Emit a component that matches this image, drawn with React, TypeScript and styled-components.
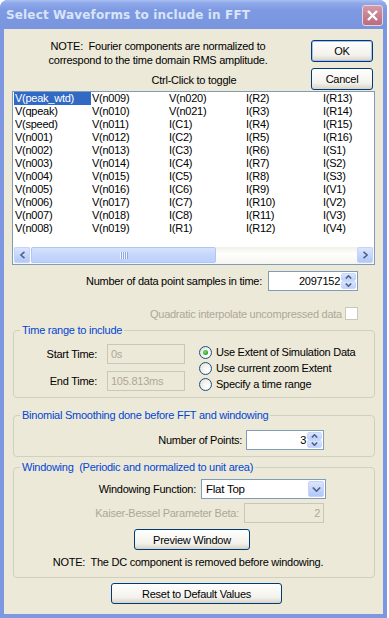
import React from 'react';
import styled, { createGlobalStyle } from 'styled-components';

const pad = (n: number) => String(n).padStart(3, '0');
const range = (a: number, b: number) => Array.from({ length: b - a + 1 }, (_, i) => a + i);

const COLUMNS: string[][] = [
  ['V(peak_wtd)', 'V(qpeak)', 'V(speed)', ...range(1, 8).map(n => `V(n${pad(n)})`)],
  range(9, 19).map(n => `V(n${pad(n)})`),
  ['V(n020)', 'V(n021)', ...range(1, 8).map(n => `I(C${n})`), 'I(R1)'],
  range(2, 12).map(n => `I(R${n})`),
  ['I(R13)', 'I(R14)', 'I(R15)', 'I(R16)', 'I(S1)', 'I(S2)', 'I(S3)', 'I(V1)', 'I(V2)', 'I(V3)', 'I(V4)'],
];

const RADIOS = ['Use Extent of Simulation Data', 'Use current zoom Extent', 'Specify a time range'];

const Chevron = ({ dir, w = 7, h = 4 }: { dir: 'up' | 'down' | 'left' | 'right'; w?: number; h?: number }) => {
  const paths = {
    up: `M0.8 ${h - 0.5} L${w / 2} 0.8 L${w - 0.8} ${h - 0.5}`,
    down: `M0.8 0.5 L${w / 2} ${h - 0.8} L${w - 0.8} 0.5`,
    left: `M${w - 0.5} 0.8 L0.8 ${h / 2} L${w - 0.5} ${h - 0.8}`,
    right: `M0.5 0.8 L${w - 0.8} ${h / 2} L0.5 ${h - 0.8}`,
  };
  return (
    <svg width={w} height={h} viewBox={`0 0 ${w} ${h}`}>
      <path d={paths[dir]} fill="none" stroke="#4d6185" strokeWidth="1.6" />
    </svg>
  );
};

const Spin = ({ value, width }: { value: string; width: number }) => (
  <SpinBox style={{ width }}>
    <SpinValue>{value}</SpinValue>
    <SpinButtons>
      <SpinHalf>
        <Chevron dir="up" />
      </SpinHalf>
      <SpinHalf>
        <Chevron dir="down" />
      </SpinHalf>
    </SpinButtons>
  </SpinBox>
);

const App = () => {
  return (
    <>
      <GlobalStyle />
      <Window>
        <TitleBar>
          <Title>Select Waveforms to include in FFT</Title>
          <CloseButton>
            <svg width="13" height="13" viewBox="0 0 13 13">
              <path d="M2 2 L11 11 M11 2 L2 11" stroke="#fff" strokeWidth="2.4" />
            </svg>
          </CloseButton>
        </TitleBar>
        <Client>
          <TopArea>
            <NoteColumn>
              <NoteText>
                NOTE:&nbsp; Fourier components are normalized to
                <br />
                correspond to the time domain RMS amplitude.
              </NoteText>
              <Hint>Ctrl-Click to toggle</Hint>
            </NoteColumn>
            <ButtonColumn>
              <DialogButton $default>OK</DialogButton>
              <DialogButton>Cancel</DialogButton>
            </ButtonColumn>
          </TopArea>

          <ListBox>
            <ListItems>
              {COLUMNS.flat().map((name, i) => (
                <ListItem key={name} $selected={i === 0}>
                  {name}
                </ListItem>
              ))}
            </ListItems>
            <ScrollBar>
              <ScrollArrow>
                <Chevron dir="left" w={5} h={8} />
              </ScrollArrow>
              <ScrollTrack>
                <ScrollThumb>
                  <Grip />
                </ScrollThumb>
              </ScrollTrack>
              <ScrollArrow>
                <Chevron dir="right" w={5} h={8} />
              </ScrollArrow>
            </ScrollBar>
          </ListBox>

          <FieldRow $top={6} $right={17} $gap={6}>
            <Label>Number of data point samples in time:</Label>
            <Spin value="2097152" width={90} />
          </FieldRow>

          <FieldRow $top={16} $right={17} $gap={3} $h={13}>
            <Label $disabled>Quadratic interpolate uncompressed data</Label>
            <CheckBox />
          </FieldRow>

          <Group $top={3}>
            <Caption>Time range to include</Caption>
            <TimeRange>
              <TimeFields>
                <Label $align="right">Start Time:</Label>
                <TextBox $disabled>0s</TextBox>
                <Label $align="right">End Time:</Label>
                <TextBox $disabled>105.813ms</TextBox>
              </TimeFields>
              <RadioList>
                {RADIOS.map((r, i) => (
                  <RadioRow key={r}>
                    <Radio $checked={i === 0} />
                    <span>{r}</span>
                  </RadioRow>
                ))}
              </RadioList>
            </TimeRange>
          </Group>

          <Group $top={10}>
            <Caption>Binomial Smoothing done before FFT and windowing</Caption>
            <GroupBody $pt={8} $pb={6}>
              <FieldRow $top={0} $right={50} $gap={4}>
                <Label>Number of Points:</Label>
                <Spin value="3" width={78} />
              </FieldRow>
            </GroupBody>
          </Group>

          <Group $top={3}>
            <Caption>Windowing&nbsp; (Periodic and normalized to unit area)</Caption>
            <GroupBody $pt={5} $pb={8}>
              <FieldRow $top={0} $right={48} $gap={5}>
                <Label>Windowing Function:</Label>
                <Select>
                  <SelectText>Flat Top</SelectText>
                  <DropButton>
                    <Chevron dir="down" w={9} h={5} />
                  </DropButton>
                </Select>
              </FieldRow>
              <FieldRow $top={4} $right={50} $gap={5}>
                <Label $disabled>Kaiser-Bessel Parameter Beta:</Label>
                <TextBox $disabled $numeric style={{ width: 80 }}>
                  2
                </TextBox>
              </FieldRow>
              <PreviewButton>Preview Window</PreviewButton>
              <BottomNote>NOTE:&nbsp; The DC component is removed before windowing.</BottomNote>
            </GroupBody>
          </Group>

          <ResetButton>Reset to Default Values</ResetButton>
        </Client>
      </Window>
    </>
  );
};

export default App;

const GlobalStyle = createGlobalStyle`
  html, body {
    margin: 0;
    padding: 0;
    background: #ffffff;
  }
  body {
    font-family: "Liberation Sans", Arial, sans-serif;
    font-size: 11px;
    letter-spacing: -0.25px;
    color: #000;
  }
  * {
    box-sizing: border-box;
  }
`;

const Window = styled.div`
  width: 387px;
  height: 618px;
  display: flex;
  flex-direction: column;
  background: #7d97e0;
  border-radius: 8px 8px 0 0;
  overflow: hidden;
`;

const TitleBar = styled.div`
  height: 29px;
  display: flex;
  align-items: center;
  justify-content: space-between;
  padding: 1px 4px 0 6px;
  background: linear-gradient(to bottom, #a9bff2 0px, #8fa9ea 3px, #7e9ae2 10px, #7b97e0 20px, #7a95df 29px);
`;

const Title = styled.div`
  font-family: "DejaVu Sans", "Liberation Sans", sans-serif;
  font-weight: bold;
  font-size: 12px;
  color: #d8e4f8;
  letter-spacing: 0.15px;
`;

const CloseButton = styled.div`
  width: 21px;
  height: 21px;
  display: flex;
  align-items: center;
  justify-content: center;
  border: 1px solid #e8d4dc;
  border-radius: 3px;
  background: linear-gradient(to bottom, #d49aa8, #c57b8d 60%, #b96c80);
`;

const Client = styled.div`
  flex: 1;
  margin: 0 4px 4px;
  padding: 0 8px;
  background: #ece9d8;
  display: flex;
  flex-direction: column;
`;

const TopArea = styled.div`
  display: flex;
  height: 62px;
  column-gap: 7px;
`;

const NoteColumn = styled.div`
  width: 292px;
  padding-top: 10px;
`;

const NoteText = styled.div`
  text-align: center;
  line-height: 14px;
`;

const Hint = styled.div`
  margin-top: 6px;
  padding-left: 72px;
  text-align: center;
  line-height: 14px;
`;

const ButtonColumn = styled.div`
  width: 62px;
  padding-top: 11px;
  display: flex;
  flex-direction: column;
  gap: 6px;
`;

const DialogButton = styled.div<{ $default?: boolean }>`
  height: 22px;
  display: flex;
  align-items: center;
  justify-content: center;
  border: 1px solid #003c74;
  border-radius: 3px;
  background: linear-gradient(to bottom, #ffffff, #f3f2ec 70%, #d8d3c7);
  box-shadow: ${p => (p.$default ? 'inset 0 0 0 1px #a9bff2' : 'none')};
`;

const ListBox = styled.div`
  height: 174px;
  border: 1px solid #7f9db9;
  background: #fff;
  display: flex;
  flex-direction: column;
`;

const ListItems = styled.div`
  flex: 1;
  overflow: hidden;
  padding-left: 1px;
  display: grid;
  grid-auto-flow: column;
  grid-template-rows: repeat(11, 13px);
  grid-auto-columns: 77px;
`;

const ListItem = styled.div<{ $selected?: boolean }>`
  line-height: 13px;
  padding-left: 1px;
  white-space: nowrap;
  background: ${p => (p.$selected ? '#316ac5' : 'transparent')};
  color: ${p => (p.$selected ? '#fff' : '#000')};
`;

const ScrollBar = styled.div`
  height: 17px;
  display: flex;
  padding: 0 1px 1px;
  background: linear-gradient(to bottom, #f1f0ea, #fefefc 40%, #f6f5f0);
`;

const ScrollArrow = styled.div`
  width: 16px;
  height: 16px;
  display: flex;
  align-items: center;
  justify-content: center;
  border: 1px solid #c3d3fd;
  border-radius: 2px;
  background: linear-gradient(to bottom, #dbe5fd, #c1d3fb 60%, #b3c8f8);
`;

const ScrollTrack = styled.div`
  flex: 1;
  padding: 0 1px;
`;

const ScrollThumb = styled.div`
  width: 185px;
  height: 16px;
  display: flex;
  align-items: center;
  justify-content: center;
  border: 1px solid #b0c6f6;
  border-radius: 2px;
  background: linear-gradient(to bottom, #d6e2fd, #c6d6fc 50%, #bccffb);
`;

const Grip = styled.div`
  width: 8px;
  height: 7px;
  background: repeating-linear-gradient(to right, #eef3fe 0 1px, #8ca6e6 1px 2px);
`;

const FieldRow = styled.div<{ $top: number; $right: number; $gap: number; $h?: number }>`
  margin-top: ${p => p.$top}px;
  height: ${p => p.$h ?? 20}px;
  padding-right: ${p => p.$right}px;
  display: flex;
  justify-content: flex-end;
  align-items: center;
  gap: ${p => p.$gap}px;
`;

const Label = styled.span<{ $disabled?: boolean; $align?: string }>`
  color: ${p => (p.$disabled ? '#aca899' : '#000')};
  text-align: ${p => p.$align ?? 'left'};
  white-space: nowrap;
`;

const SpinBox = styled.div`
  height: 20px;
  display: flex;
  border: 1px solid #7f9db9;
  background: #fff;
  padding: 1px;
`;

const SpinValue = styled.div`
  flex: 1;
  text-align: right;
  line-height: 16px;
  padding-right: 1px;
`;

const SpinButtons = styled.div`
  width: 15px;
  display: flex;
  flex-direction: column;
`;

const SpinHalf = styled.div`
  flex: 1;
  display: flex;
  align-items: center;
  justify-content: center;
  border: 1px solid #c8d7fc;
  border-radius: 2px;
  background: linear-gradient(to bottom, #dbe5fd, #bfd1fa);
`;

const CheckBox = styled.div`
  width: 13px;
  height: 13px;
  border: 1px solid #cac8bb;
  background: #fff;
`;

const Group = styled.fieldset<{ $top: number }>`
  margin: ${p => p.$top}px 0 0 1px;
  padding: 0;
  border: 1px solid #d0d0bf;
  border-radius: 4px;
  min-width: 0;
`;

const Caption = styled.legend`
  margin-left: 6px;
  padding: 0 2px;
  line-height: 14px;
  color: #0046d5;
`;

const GroupBody = styled.div<{ $pt: number; $pb: number }>`
  padding: ${p => p.$pt}px 0 ${p => p.$pb}px;
  display: flex;
  flex-direction: column;
`;

const TimeRange = styled.div`
  display: flex;
  padding: 7px 0 5px;
`;

const TimeFields = styled.div`
  display: grid;
  grid-template-columns: 83px 78px;
  grid-auto-rows: 20px;
  column-gap: 10px;
  row-gap: 7px;
  align-items: center;
`;

const TextBox = styled.div<{ $disabled?: boolean; $numeric?: boolean }>`
  height: 20px;
  border: 1px solid ${p => (p.$disabled ? '#c9c7ba' : '#7f9db9')};
  background: ${p => (p.$disabled ? '#ece9d8' : '#fff')};
  color: ${p => (p.$disabled ? '#aca899' : '#000')};
  line-height: 18px;
  padding: 0 3px;
  text-align: ${p => (p.$numeric ? 'right' : 'left')};
`;

const RadioList = styled.div`
  margin-left: 14px;
  display: flex;
  flex-direction: column;
`;

const RadioRow = styled.div`
  height: 16px;
  display: flex;
  align-items: center;
  gap: 4px;
`;

const Radio = styled.div<{ $checked?: boolean }>`
  width: 13px;
  height: 13px;
  border-radius: 50%;
  border: 1px solid #1c5180;
  background: radial-gradient(circle at 65% 65%, #ffffff 0, #f2f1ea 50%, #d6d4ca 100%);
  display: flex;
  align-items: center;
  justify-content: center;
  &::after {
    content: '';
    display: ${p => (p.$checked ? 'block' : 'none')};
    width: 5px;
    height: 5px;
    border-radius: 50%;
    background: radial-gradient(circle at 40% 40%, #7fe07f, #21a121 70%);
  }
`;

const Select = styled.div`
  width: 125px;
  height: 20px;
  display: flex;
  border: 1px solid #7f9db9;
  background: #fff;
  padding: 1px;
`;

const SelectText = styled.div`
  flex: 1;
  padding-left: 3px;
  line-height: 16px;
  font-size: 11.5px;
`;

const DropButton = styled.div`
  width: 16px;
  display: flex;
  align-items: center;
  justify-content: center;
  border: 1px solid #c3d3fd;
  border-radius: 2px;
  background: linear-gradient(to bottom, #dbe5fd, #c1d3fb 60%, #b3c8f8);
`;

const PreviewButton = styled(DialogButton)`
  margin-top: 6px;
  width: 116px;
  height: 21px;
  align-self: center;
  margin-right: 4px;
`;

const BottomNote = styled.div`
  margin-top: 5px;
  line-height: 14px;
  text-align: center;
  padding-right: 12px;
`;

const ResetButton = styled(DialogButton)`
  margin: 5px 0 0 6px;
  width: 171px;
  height: 21px;
  align-self: center;
`;
